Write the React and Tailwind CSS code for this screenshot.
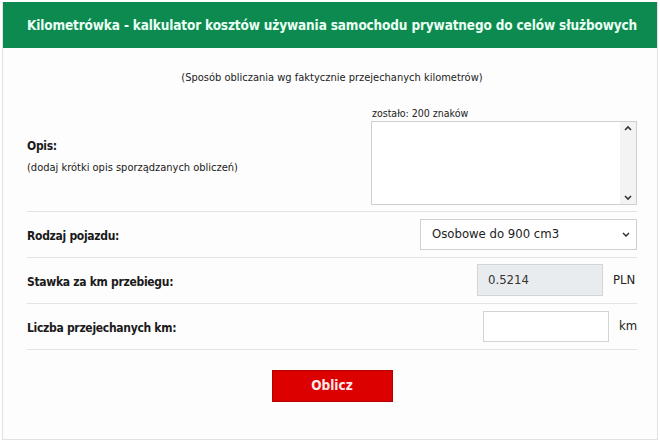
import React, { useState } from 'react';

const FONT = { fontFamily: '"DejaVu Sans Condensed", "Liberation Sans", sans-serif' };

const Row = ({ label, children }) => (
  <div className="flex items-center justify-between h-[46px] border-b border-[#e4e4e4]">
    <span className="text-[12px] font-bold tracking-[-0.3px] text-[#1a1a1a] pt-[4px]">{label}</span>
    <div className="flex items-center">{children}</div>
  </div>
);

export default function App() {
  const [opis, setOpis] = useState('');
  const [km, setKm] = useState('');
  const [rodzaj, setRodzaj] = useState('900');

  return (
    <div className="w-[660px] h-[442px] bg-white px-[2px] pt-[2px]" style={FONT}>
      <div className="h-[438px] border border-[#e2e2e2] border-t-0 bg-[#fdfdfd]">
        <div className="h-[46px] bg-[#0d8a4f] flex items-center px-6">
          <h1 className="text-[13.5px] font-bold tracking-[-0.15px] text-[#eafff4] whitespace-nowrap">
            Kilometrówka - kalkulator kosztów używania samochodu prywatnego do celów służbowych
          </h1>
        </div>

        <div className="pl-[24px] pr-[20px]">
          <p className="text-center text-[11px] text-[#222] pt-[22px] pb-[20px]">
            (Sposób obliczania wg faktycznie przejechanych kilometrów)
          </p>

          <div className="flex items-center justify-between pb-[6px] border-b border-[#e4e4e4]">
            <div className="text-[#1a1a1a] pt-[2px]">
              <div className="text-[12px] font-bold tracking-[-0.3px]">Opis:</div>
              <div className="text-[11px] mt-[5px]">(dodaj krótki opis sporządzanych obliczeń)</div>
            </div>
            <div className="flex flex-col w-[266px] shrink-0">
              <span className="text-[10.5px] text-[#222] leading-[13px] pl-[1px] mb-[1px]">
                zostało: {200 - opis.length} znaków
              </span>
              <div className="flex w-[266px] h-[84px] border border-[#cfcfcf] bg-white">
                <textarea
                  value={opis}
                  maxLength={200}
                  onChange={(e) => setOpis(e.target.value)}
                  className="flex-1 min-w-0 resize-none outline-none p-1 text-[13px] overflow-hidden"
                />
                <div className="w-[16px] bg-[#f3f3f3] flex flex-col items-center justify-between py-[3px] text-[#333]">
                  <svg width="8" height="6" viewBox="0 0 8 6"><path d="M1 5 L4 2 L7 5" stroke="currentColor" strokeWidth="1.6" fill="none" /></svg>
                  <svg width="8" height="6" viewBox="0 0 8 6"><path d="M1 1 L4 4 L7 1" stroke="currentColor" strokeWidth="1.6" fill="none" /></svg>
                </div>
              </div>
            </div>
          </div>

          <Row label="Rodzaj pojazdu:">
            <div className="relative w-[217px] h-[31px]">
              <select
                value={rodzaj}
                onChange={(e) => setRodzaj(e.target.value)}
                className="appearance-none w-full h-full border border-[#d0d0d0] bg-white pl-[11px] text-[13px] text-[#222] outline-none"
              >
                <option value="900">Osobowe do 900 cm3</option>
                <option value="901">Osobowe powyżej 900 cm3</option>
                <option value="moto">Motocykl</option>
                <option value="motorower">Motorower</option>
              </select>
              <svg className="absolute right-[7px] top-[13px] pointer-events-none" width="8" height="5" viewBox="0 0 8 5">
                <path d="M1 1 L4 4 L7 1" stroke="#333" strokeWidth="1.5" fill="none" />
              </svg>
            </div>
          </Row>

          <Row label="Stawka za km przebiegu:">
            <div className="w-[126px] h-[32px] bg-[#e9ecef] border border-[#d4d4d4] flex items-center pl-[10px] text-[13px] text-[#333]">
              0.5214
            </div>
            <span className="ml-[10px] text-[13px] text-[#222] w-[24px]">PLN</span>
          </Row>

          <Row label="Liczba przejechanych km:">
            <input
              value={km}
              onChange={(e) => setKm(e.target.value)}
              className="w-[126px] h-[31px] border border-[#d4d4d4] bg-white px-2 text-[13px] outline-none"
            />
            <span className="ml-[10px] text-[13px] text-[#222] w-[18px]">km</span>
          </Row>

          <div className="flex justify-center pt-[20px]">
            <button className="w-[121px] h-[32px] bg-[#dc0000] border border-[#b30000] text-[13.5px] font-bold text-[#ffe9e9]">
              Oblicz
            </button>
          </div>
        </div>
      </div>
    </div>
  );
}
